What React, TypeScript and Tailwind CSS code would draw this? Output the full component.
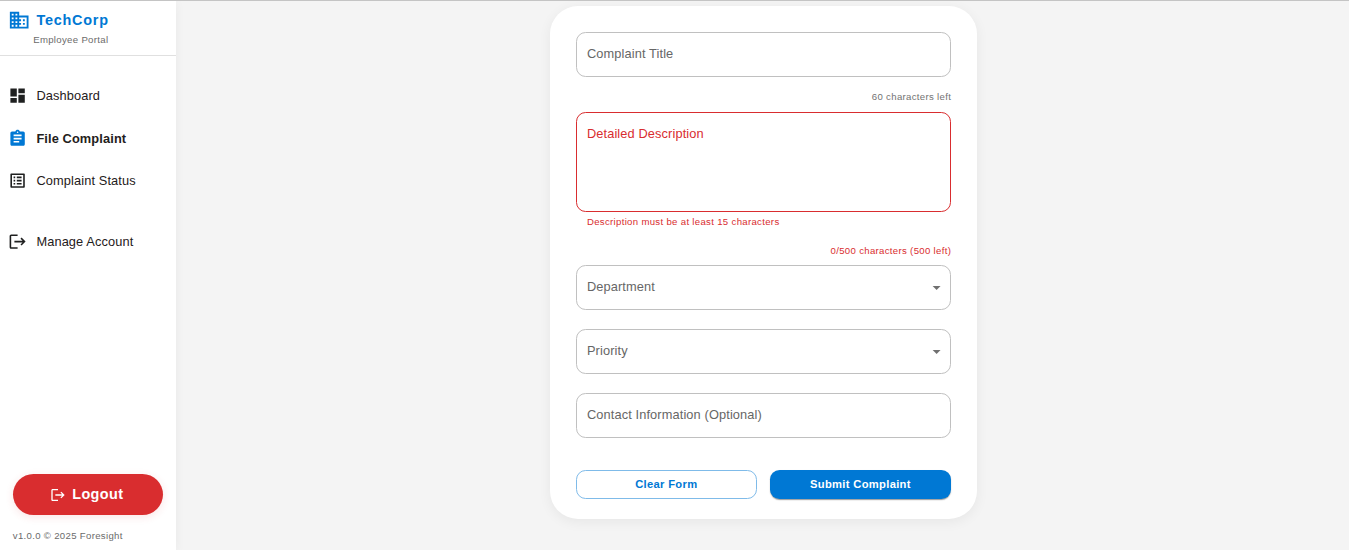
import type { ReactNode } from "react";
import type { IconType } from "react-icons";
import {
  MdArrowDropDown,
  MdAssignment,
  MdBusiness,
  MdDashboard,
  MdListAlt,
  MdLogout,
} from "react-icons/md";

type NavItemProps = { icon: IconType; label: string; active?: boolean };

function NavItem({ icon: Icon, label, active = false }: NavItemProps) {
  return (
    <a className="flex h-[42.6px] items-center gap-[9.2px] pl-2">
      <Icon className={active ? "size-[19.2px] text-[#0078d4]" : "size-[19.2px]"} />
      <span
        className={
          active
            ? "text-[12.8px] font-bold tracking-[0.12px]"
            : "text-[12.8px] tracking-[0.12px]"
        }
      >
        {label}
      </span>
    </a>
  );
}

function Sidebar() {
  return (
    <aside className="flex w-44 shrink-0 flex-col bg-white text-[#1f2020] shadow-[0_2px_10px_rgba(0,0,0,0.05)]">
      <header className="flex h-[55px] flex-col border-b border-[#e0e0e0] pt-2">
        <div className="flex h-[22.4px] items-center gap-[6.2px] pl-2">
          <MdBusiness className="size-[22.4px] text-[#0078d4]" />
          <span className="pt-px text-[14.4px] font-bold tracking-[0.75px] text-[#0078d4]">
            TechCorp
          </span>
        </div>
        <span className="pt-[0.8px] pl-[33.2px] text-[9.6px] leading-4 tracking-[0.32px] text-[#6b6b6b]">
          Employee Portal
        </span>
      </header>
      <nav className="flex flex-col pt-[18.4px]">
        <NavItem icon={MdDashboard} label="Dashboard" />
        <NavItem icon={MdAssignment} label="File Complaint" active />
        <NavItem icon={MdListAlt} label="Complaint Status" />
        <div className="h-[18px]" />
        <NavItem icon={MdLogout} label="Manage Account" />
      </nav>
      <footer className="mt-auto px-[12.8px] pb-[6.4px]">
        <button className="flex h-[41px] w-full items-center justify-center gap-[6px] rounded-full bg-[#d92d2f] pr-[2.4px] text-[14.4px] font-bold tracking-[0.4px] text-white shadow-[0_2px_8px_rgba(217,45,47,0.12)]">
          <MdLogout className="mt-px size-4" />
          <span className="pt-px">Logout</span>
        </button>
        <p className="mt-[13px] text-[9.6px] leading-4 tracking-[0.32px] text-[#6b6b6b]">
          v1.0.0 © 2025 Foresight
        </p>
      </footer>
    </aside>
  );
}

function Field({ label, select = false }: { label: string; select?: boolean }) {
  return (
    <div className="flex h-[45px] items-center justify-between rounded-[9.6px] border border-[#c0c0c0] pr-[3.4px] pl-[10.4px] text-[12.8px] tracking-[0.12px] text-[#666]">
      <span className="pb-px">{label}</span>
      {select && <MdArrowDropDown className="size-[19.2px] text-[#707070]" />}
    </div>
  );
}

function Counter({ children, error = false }: { children: ReactNode; error?: boolean }) {
  return (
    <p
      className={
        error
          ? "-mr-[0.7px] text-right text-[9.6px] leading-4 tracking-[0.32px] text-[#d92d2f]"
          : "-mr-[0.7px] text-right text-[9.6px] leading-4 tracking-[0.32px] text-[#737373]"
      }
    >
      {children}
    </p>
  );
}

function ComplaintForm() {
  return (
    <form className="flex h-[513px] w-[427px] flex-col rounded-[28px] bg-white px-[26px] pt-[26px] shadow-[0_3px_13px_rgba(0,0,0,0.06)]">
      <Field label="Complaint Title" />
      <div className="mt-3 mb-[7px]">
        <Counter>60 characters left</Counter>
      </div>
      <div className="h-[100px] rounded-[9.6px] border border-[#d92d2f] pt-[11px] pl-[10.4px] text-[12.8px] leading-[20px] tracking-[0.12px] text-[#d92d2f]">
        Detailed Description
      </div>
      <p className="mt-[2px] mb-[13px] pl-[11.4px] text-[9.6px] leading-4 tracking-[0.32px] text-[#d92d2f]">
        Description must be at least 15 characters
      </p>
      <div className="mb-[6px]">
        <Counter error>0/500 characters (500 left)</Counter>
      </div>
      <div className="flex flex-col gap-[19px]">
        <Field label="Department" select />
        <Field label="Priority" select />
        <Field label="Contact Information (Optional)" />
      </div>
      <div className="mt-8 grid grid-cols-2 gap-[13px] text-[11.2px] font-bold tracking-[0.32px]">
        <button type="button" className="h-[29px] rounded-[9.6px] border border-[#7fbbe9] pl-[0.6px] text-[#0078d4]">
          Clear Form
        </button>
        <button
          type="button"
          className="h-[29px] rounded-[9.6px] bg-[#0078d4] pl-[0.8px] text-white shadow-[0_2px_1px_-1px_rgba(0,0,0,0.2),0_1px_1px_rgba(0,0,0,0.14),0_1px_2px_rgba(0,0,0,0.12)]"
        >
          Submit Complaint
        </button>
      </div>
    </form>
  );
}

export default function App() {
  return (
    <div className="flex h-[550px] flex-col overflow-hidden border-t border-[#c4c4c4] bg-[#f4f4f4] font-['Liberation_Sans',sans-serif]">
      <div className="flex min-h-0 flex-1">
        <Sidebar />
        <main className="flex flex-1 justify-center pt-[5px] pl-px">
          <ComplaintForm />
        </main>
      </div>
    </div>
  );
}
